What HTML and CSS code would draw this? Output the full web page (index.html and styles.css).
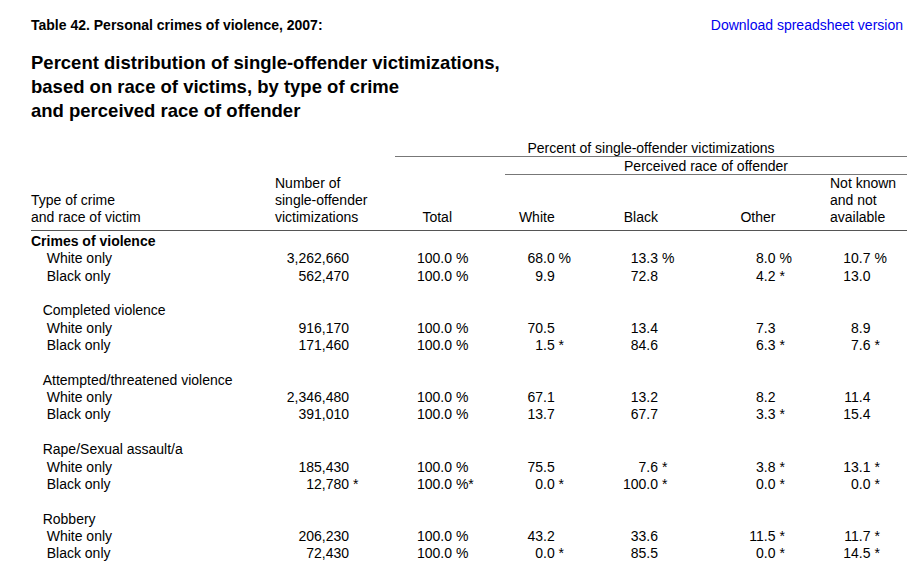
FILE: index.html
```html
<!DOCTYPE html>
<html>
<head>
<meta charset="utf-8">
<title>Table 42</title>
<link rel="stylesheet" href="styles.css">
</head>
<body>
<div class="page">
  <div class="topbar">
    <h2 class="caption">Table 42. Personal crimes of violence, 2007:</h2>
    <a class="dl" href="#">Download spreadsheet version</a>
  </div>
  <h1 class="title">Percent distribution of single-offender victimizations,<br>based on race of victims, by type of crime<br>and perceived race of offender</h1>

  <div class="table">
    <div class="row hdr-a">
      <span class="span-pct">Percent of single-offender victimizations</span>
    </div>
    <div class="row hdr-b">
      <span class="span-race">Perceived race of offender</span>
    </div>
    <div class="row hdr-c">
      <span class="hl">Type of crime<br>and race of victim</span>
      <span class="hl">Number of<br>single-offender<br>victimizations</span>
      <span class="c"><span class="v t">Total</span></span>
      <span class="c"><span class="v w">White</span></span>
      <span class="c"><span class="v b">Black</span></span>
      <span class="c"><span class="v o">Other</span></span>
      <span class="hl">Not known<br>and not<br>available</span>
    </div>

    <div class="row first"><span class="grp top">Crimes of violence</span></div>
    <div class="row">
      <span class="lbl">White only</span>
      <span class="c"><span class="v n">3,262,660</span></span>
      <span class="c"><span class="v t">100.0</span><span class="s"> %</span></span>
      <span class="c"><span class="v w">68.0</span><span class="s"> %</span></span>
      <span class="c"><span class="v b">13.3</span><span class="s"> %</span></span>
      <span class="c"><span class="v o">8.0</span><span class="s"> %</span></span>
      <span class="c"><span class="v k">10.7</span><span class="s"> %</span></span>
    </div>
    <div class="row">
      <span class="lbl">Black only</span>
      <span class="c"><span class="v n">562,470</span></span>
      <span class="c"><span class="v t">100.0</span><span class="s"> %</span></span>
      <span class="c"><span class="v w">9.9</span></span>
      <span class="c"><span class="v b">72.8</span></span>
      <span class="c"><span class="v o">4.2</span><span class="s"> *</span></span>
      <span class="c"><span class="v k">13.0</span></span>
    </div>
    <div class="row blank"></div>

    <div class="row"><span class="grp">Completed violence</span></div>
    <div class="row">
      <span class="lbl">White only</span>
      <span class="c"><span class="v n">916,170</span></span>
      <span class="c"><span class="v t">100.0</span><span class="s"> %</span></span>
      <span class="c"><span class="v w">70.5</span></span>
      <span class="c"><span class="v b">13.4</span></span>
      <span class="c"><span class="v o">7.3</span></span>
      <span class="c"><span class="v k">8.9</span></span>
    </div>
    <div class="row">
      <span class="lbl">Black only</span>
      <span class="c"><span class="v n">171,460</span></span>
      <span class="c"><span class="v t">100.0</span><span class="s"> %</span></span>
      <span class="c"><span class="v w">1.5</span><span class="s"> *</span></span>
      <span class="c"><span class="v b">84.6</span></span>
      <span class="c"><span class="v o">6.3</span><span class="s"> *</span></span>
      <span class="c"><span class="v k">7.6</span><span class="s"> *</span></span>
    </div>
    <div class="row blank"></div>

    <div class="row"><span class="grp">Attempted/threatened violence</span></div>
    <div class="row">
      <span class="lbl">White only</span>
      <span class="c"><span class="v n">2,346,480</span></span>
      <span class="c"><span class="v t">100.0</span><span class="s"> %</span></span>
      <span class="c"><span class="v w">67.1</span></span>
      <span class="c"><span class="v b">13.2</span></span>
      <span class="c"><span class="v o">8.2</span></span>
      <span class="c"><span class="v k">11.4</span></span>
    </div>
    <div class="row">
      <span class="lbl">Black only</span>
      <span class="c"><span class="v n">391,010</span></span>
      <span class="c"><span class="v t">100.0</span><span class="s"> %</span></span>
      <span class="c"><span class="v w">13.7</span></span>
      <span class="c"><span class="v b">67.7</span></span>
      <span class="c"><span class="v o">3.3</span><span class="s"> *</span></span>
      <span class="c"><span class="v k">15.4</span></span>
    </div>
    <div class="row blank"></div>

    <div class="row"><span class="grp">Rape/Sexual assault/a</span></div>
    <div class="row">
      <span class="lbl">White only</span>
      <span class="c"><span class="v n">185,430</span></span>
      <span class="c"><span class="v t">100.0</span><span class="s"> %</span></span>
      <span class="c"><span class="v w">75.5</span></span>
      <span class="c"><span class="v b">7.6</span><span class="s"> *</span></span>
      <span class="c"><span class="v o">3.8</span><span class="s"> *</span></span>
      <span class="c"><span class="v k">13.1</span><span class="s"> *</span></span>
    </div>
    <div class="row">
      <span class="lbl">Black only</span>
      <span class="c"><span class="v n">12,780</span><span class="s"> *</span></span>
      <span class="c"><span class="v t">100.0</span><span class="s"> %*</span></span>
      <span class="c"><span class="v w">0.0</span><span class="s"> *</span></span>
      <span class="c"><span class="v b">100.0</span><span class="s"> *</span></span>
      <span class="c"><span class="v o">0.0</span><span class="s"> *</span></span>
      <span class="c"><span class="v k">0.0</span><span class="s"> *</span></span>
    </div>
    <div class="row blank"></div>

    <div class="row"><span class="grp">Robbery</span></div>
    <div class="row">
      <span class="lbl">White only</span>
      <span class="c"><span class="v n">206,230</span></span>
      <span class="c"><span class="v t">100.0</span><span class="s"> %</span></span>
      <span class="c"><span class="v w">43.2</span></span>
      <span class="c"><span class="v b">33.6</span></span>
      <span class="c"><span class="v o">11.5</span><span class="s"> *</span></span>
      <span class="c"><span class="v k">11.7</span><span class="s"> *</span></span>
    </div>
    <div class="row">
      <span class="lbl">Black only</span>
      <span class="c"><span class="v n">72,430</span></span>
      <span class="c"><span class="v t">100.0</span><span class="s"> %</span></span>
      <span class="c"><span class="v w">0.0</span><span class="s"> *</span></span>
      <span class="c"><span class="v b">85.5</span></span>
      <span class="c"><span class="v o">0.0</span><span class="s"> *</span></span>
      <span class="c"><span class="v k">14.5</span><span class="s"> *</span></span>
    </div>
  </div>
</div>
</body>
</html>
```

FILE: styles.css
```css
html, body {
  margin: 0;
  padding: 0;
  background: #ffffff;
}

body {
  font-family: "Liberation Sans", Arial, sans-serif;
  font-size: 14px;
  color: #000000;
}

.page {
  padding: 17px 20px 0 31px;
}

.topbar {
  display: flex;
  justify-content: space-between;
  align-items: flex-start;
  line-height: 16px;
}

.caption {
  margin: 0;
  font-size: 14px;
  font-weight: bold;
  line-height: 16px;
}

.dl {
  color: #0000ee;
  text-decoration: none;
  font-size: 14px;
  line-height: 16px;
}

.title {
  margin: 18.4px 0 0 0;
  font-size: 18.5px;
  font-weight: bold;
  line-height: 23.85px;
}

.table {
  margin-top: 17.5px;
  width: 876px;
}

.row {
  display: grid;
  grid-template-columns: 244px 120px 110px 95px 100px 130px 77px;
  line-height: 17.35px;
  height: 17.35px;
  white-space: nowrap;
}

.hdr-a, .hdr-b {
  line-height: 17px;
  height: 17px;
}

.span-pct {
  grid-column: 3 / 8;
  text-align: center;
  border-bottom: 1px solid #777777;
  height: 17px;
  box-sizing: border-box;
}

.hdr-b {
  margin-top: 1px;
}

.span-race {
  grid-column: 4 / 8;
  text-align: center;
  border-bottom: 1px solid #777777;
  height: 17px;
  box-sizing: border-box;
}

.hdr-c {
  height: auto;
  line-height: 16.7px;
  align-items: end;
  padding-top: 0;
  padding-bottom: 4px;
  border-bottom: 1px solid #555555;
  margin-bottom: 2px;
}

.row.first {
  margin-bottom: 0.5px;
}

.hl {
  display: block;
}

.c {
  display: block;
}

.v {
  display: inline-block;
  text-align: right;
}

.s {
  white-space: pre;
}

.n { width: 74px; }
.t { width: 57px; }
.w { width: 49.7px; }
.b { width: 58px; }
.o { width: 75.5px; }
.k { width: 40.5px; }

.grp {
  grid-column: 1 / 3;
  padding-left: 11.7px;
}

.grp.top {
  padding-left: 0;
  font-weight: bold;
}

.lbl {
  padding-left: 15.7px;
}
```
